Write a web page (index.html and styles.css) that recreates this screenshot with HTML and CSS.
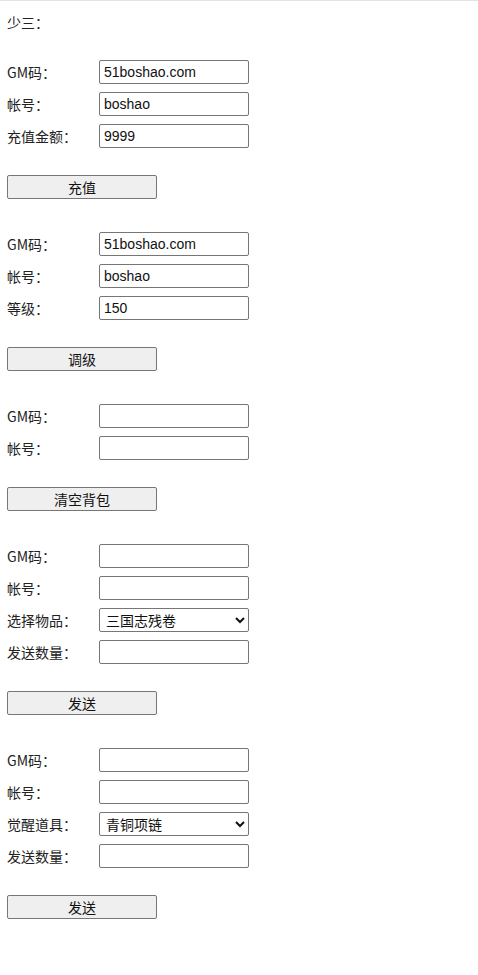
FILE: index.html
```html
<!DOCTYPE html>
<html lang="zh-CN">
<head>
<meta charset="utf-8">
<title>少三</title>
<link rel="stylesheet" href="styles.css">
</head>
<body>
<div class="page">
  <div class="title">少三：</div>

  <form class="section">
    <div class="row"><label>GM码：</label><input class="field" type="text" value="51boshao.com"></div>
    <div class="row"><label>帐号：</label><input class="field" type="text" value="boshao"></div>
    <div class="row"><label>充值金额：</label><input class="field" type="text" value="9999"></div>
    <button class="btn" type="button">充值</button>
  </form>

  <form class="section">
    <div class="row"><label>GM码：</label><input class="field" type="text" value="51boshao.com"></div>
    <div class="row"><label>帐号：</label><input class="field" type="text" value="boshao"></div>
    <div class="row"><label>等级：</label><input class="field" type="text" value="150"></div>
    <button class="btn" type="button">调级</button>
  </form>

  <form class="section">
    <div class="row"><label>GM码：</label><input class="field" type="text"></div>
    <div class="row"><label>帐号：</label><input class="field" type="text"></div>
    <button class="btn" type="button">清空背包</button>
  </form>

  <form class="section">
    <div class="row"><label>GM码：</label><input class="field" type="text"></div>
    <div class="row"><label>帐号：</label><input class="field" type="text"></div>
    <div class="row"><label>选择物品：</label><select class="field sel"><option>三国志残卷</option></select></div>
    <div class="row"><label>发送数量：</label><input class="field" type="text"></div>
    <button class="btn" type="button">发送</button>
  </form>

  <form class="section">
    <div class="row"><label>GM码：</label><input class="field" type="text"></div>
    <div class="row"><label>帐号：</label><input class="field" type="text"></div>
    <div class="row"><label>觉醒道具：</label><select class="field sel"><option>青铜项链</option></select></div>
    <div class="row"><label>发送数量：</label><input class="field" type="text"></div>
    <button class="btn" type="button">发送</button>
  </form>
</div>
</body>
</html>
```

FILE: styles.css
```css
html, body {
  margin: 0;
  padding: 0;
  background: #ffffff;
}
body {
  border-top: 1px solid #e3e3e3;
  font-family: "Noto Sans CJK SC", "Liberation Sans", sans-serif;
  font-size: 14px;
  color: #222222;
}
.page {
  padding: 11px 7px 40px;
  display: flex;
  flex-direction: column;
}
.title {
  line-height: 20px;
  height: 20px;
  margin-bottom: 28px;
}
.section {
  display: flex;
  flex-direction: column;
  gap: 8px;
  margin: 0 0 33px 0;
}
.row {
  display: flex;
  align-items: center;
  height: 24px;
}
.row label {
  width: 92px;
  flex: none;
  line-height: 24px;
  color: #222222;
}
.field {
  box-sizing: border-box;
  width: 150px;
  height: 24px;
  margin: 0;
  padding: 1px 4px;
  border: 1px solid #767676;
  border-radius: 2px;
  background: #ffffff;
  font-family: "Liberation Sans", Arial, "Noto Sans CJK SC", sans-serif;
  font-size: 14px;
  color: #111111;
}
.sel {
  padding: 0 2px;
  font-family: "Noto Sans CJK SC", sans-serif;
  font-size: 14px;
}
.btn {
  box-sizing: border-box;
  width: 150px;
  height: 24px;
  margin: 19px 0 0 0;
  padding: 0;
  border: 1px solid #767676;
  border-radius: 2px;
  background: #efefef;
  font-family: "Noto Sans CJK SC", sans-serif;
  font-size: 14px;
  color: #111111;
  align-self: flex-start;
}
```
